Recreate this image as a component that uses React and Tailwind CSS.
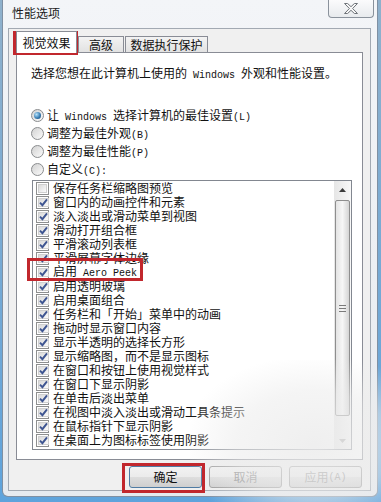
import React from "react";

const effects = [
  { label: "保存任务栏缩略图预览", checked: false },
  { label: "窗口内的动画控件和元素", checked: true },
  { label: "淡入淡出或滑动菜单到视图", checked: true },
  { label: "滑动打开组合框", checked: true },
  { label: "平滑滚动列表框", checked: true },
  { label: "平滑屏幕字体边缘", checked: true },
  { label: ["启用", " Aero Peek"], checked: true },
  { label: "启用透明玻璃", checked: true },
  { label: "启用桌面组合", checked: true },
  { label: "任务栏和「开始」菜单中的动画", checked: true },
  { label: "拖动时显示窗口内容", checked: true },
  { label: "显示半透明的选择长方形", checked: true },
  { label: "显示缩略图，而不是显示图标", checked: true },
  { label: "在窗口和按钮上使用视觉样式", checked: true },
  { label: "在窗口下显示阴影", checked: true },
  { label: "在单击后淡出菜单", checked: true },
  { label: "在视图中淡入淡出或滑动工具条提示", checked: true },
  { label: "在鼠标指针下显示阴影", checked: true },
  { label: "在桌面上为图标标签使用阴影", checked: true },
];

function Latin({ children }) {
  return <span className="font-['Liberation_Mono',monospace] text-[10px] whitespace-pre">{children}</span>;
}

function Radio({ checked }) {
  return (
    <span className="w-[13px] h-[13px] shrink-0 rounded-full border border-[#8a8c8e] bg-gradient-to-br from-[#d2d2d2] to-[#fbfbfb] flex items-center justify-center">
      {checked && (
        <span className="w-[7px] h-[7px] rounded-full bg-[radial-gradient(circle_at_35%_35%,#b7e3fb,#3a7fb5_55%,#123f68)]" />
      )}
    </span>
  );
}

function CheckBox({ checked }) {
  return (
    <span className="w-[13px] h-[13px] shrink-0 border border-[#8e8f8f] bg-white p-px flex">
      <span className="flex-1 border border-[#d0d0d0] bg-gradient-to-br from-[#dadada] to-[#fbfbfb] flex items-center justify-center">
        {checked && (
          <svg width="9" height="9" viewBox="0 0 9 9">
            <path d="M1 4.6 L3.4 7.2 L8 1.3" fill="none" stroke="#3e5591" strokeWidth="1.9" />
          </svg>
        )}
      </span>
    </span>
  );
}

function Button({ children, faded }) {
  return (
    <div
      className={`w-[73px] h-[22px] rounded-[3px] border flex items-center justify-center text-[12px] bg-[linear-gradient(#f2f2f2_0%,#ebebeb_50%,#dddddd_51%,#cfcfcf_100%)] ${
        faded ? "border-[#9a9a9a] text-[#8a8a8a]" : "border-[#4f7ba3] text-[#111]"
      }`}
    >
      {children}
    </div>
  );
}

function ScrollBar() {
  return (
    <div className="w-[17px] flex flex-col bg-gradient-to-r from-[#e6e6e6] to-[#f8f8f8]">
      <div className="h-[17px] flex items-center justify-center">
        <svg width="7" height="4" viewBox="0 0 7 4">
          <path d="M0 4 L3.5 0 L7 4 Z" fill="#3c3c3c" />
        </svg>
      </div>
      <div className="mt-[2px] h-[216px] mx-px rounded-[2px] border border-[#8e8e8e] bg-gradient-to-r from-[#e4e4e4] via-[#f6f6f6] to-[#d4d4d4] flex flex-col items-center justify-center gap-[2px]">
        <span className="w-[7px] h-px bg-[#7a7a7a]" />
        <span className="w-[7px] h-px bg-[#7a7a7a]" />
        <span className="w-[7px] h-px bg-[#7a7a7a]" />
      </div>
      <div className="flex-1" />
      <div className="h-[17px] flex items-center justify-center">
        <svg width="7" height="4" viewBox="0 0 7 4">
          <path d="M0 0 L7 0 L3.5 4 Z" fill="#9a9a9a" />
        </svg>
      </div>
    </div>
  );
}

export default function App() {
  return (
    <div className="relative w-[381px] h-[502px] overflow-hidden bg-gradient-to-b from-[#8fb1cc] to-[#5ea3dc] font-['Noto_Sans_CJK_SC',sans-serif] text-[#111]">
      {/* Window */}
      <div className="ml-[2px] w-[376px] h-[497px] flex flex-col border-x border-b border-[#7f90a3] rounded-b-[6px] bg-gradient-to-b from-[#f3f5f8] to-[#e6eaef] px-[5px] pb-[5px]">
        {/* Title bar */}
        <div className="h-[28px] flex justify-between items-start">
          <span className="mt-[5px] ml-[4px] text-[12px] leading-[16px] text-[#1a1a1a]">性能选项</span>
          <div className="w-[46px] h-[18px] mr-[-2px] rounded-b-[4px] border border-t-0 border-[#8a929c] bg-gradient-to-b from-[#fbfbfc] to-[#e8ebee] flex items-center justify-center">
            <svg width="14" height="11" viewBox="0 0 14 11">
              <path
                d="M0.5 0.5 H3.6 L7 3.7 L10.4 0.5 H13.5 L8.6 5.5 L13.5 10.5 H10.4 L7 7.3 L3.6 10.5 H0.5 L5.4 5.5 Z"
                fill="#f7f7f7"
                stroke="#6f747a"
                strokeWidth="1"
              />
            </svg>
          </div>
        </div>

        {/* Client area */}
        <div className="w-[363px] h-[463px] border border-[#a2a9b2] bg-[#f0f0f0] pt-[2px] flex flex-col">
          <div className="ml-[7px] w-[347px]">
            {/* Tabs */}
            <div className="h-[21px] flex items-end gap-px text-[12px]">
              <div className="relative z-10 w-[61px] h-[22px] -mb-px border border-b-0 border-[#898c95] bg-white flex items-center justify-center leading-[16px]">
                视觉效果
              </div>
              <div className="w-[46px] h-[16px] border border-b-0 border-[#898c95] bg-gradient-to-b from-[#f3f3f3] to-[#e2e2e2] flex items-center justify-center leading-[14px]">
                高级
              </div>
              <div className="w-[83px] h-[16px] border border-b-0 border-[#898c95] bg-gradient-to-b from-[#f3f3f3] to-[#e2e2e2] flex items-center justify-center leading-[14px]">
                数据执行保护
              </div>
            </div>

            {/* Tab page */}
            <div className="h-[408px] border border-[#898c95] bg-white pl-[14px] pt-[13px] text-[12px]">
              <div className="leading-[14px] whitespace-nowrap">
                选择您想在此计算机上使用的<Latin> Windows </Latin>外观和性能设置。
              </div>

              <div className="mt-[23px] flex flex-col">
                <label className="h-[18px] flex items-center gap-[3px] whitespace-nowrap">
                  <Radio checked />
                  <span>
                    让<Latin> Windows </Latin>选择计算机的最佳设置<Latin>(L)</Latin>
                  </span>
                </label>
                <label className="h-[18px] flex items-center gap-[3px]">
                  <Radio />
                  <span>
                    调整为最佳外观<Latin>(B)</Latin>
                  </span>
                </label>
                <label className="h-[18px] flex items-center gap-[3px]">
                  <Radio />
                  <span>
                    调整为最佳性能<Latin>(P)</Latin>
                  </span>
                </label>
                <label className="h-[18px] flex items-center gap-[3px]">
                  <Radio />
                  <span>
                    自定义<Latin>(C):</Latin>
                  </span>
                </label>
              </div>

              {/* Effects list */}
              <div className="mt-[2px] ml-px w-[320px] h-[270px] border border-[#828790] bg-white flex">
                <div className="flex-1 pl-[3px] flex flex-col">
                  {effects.map((item, index) => (
                    <div key={index} className="h-[14px] shrink-0 flex items-center gap-[4px] leading-[14px] whitespace-nowrap">
                      <CheckBox checked={item.checked} />
                      {Array.isArray(item.label) ? (
                        <span>
                          {item.label[0]}
                          <Latin>{item.label[1]}</Latin>
                        </span>
                      ) : (
                        <span>{item.label}</span>
                      )}
                    </div>
                  ))}
                </div>
                <ScrollBar />
              </div>
            </div>
          </div>

          {/* Buttons */}
          <div className="mt-[6px] pr-[8px] flex justify-end gap-[7px]">
            <Button>确定</Button>
            <Button faded>取消</Button>
            <Button faded>
              应用<Latin>(A)</Latin>
            </Button>
          </div>
        </div>
      </div>

      {/* Watermark haze */}
      <div className="pointer-events-none absolute left-[190px] top-[360px] w-[191px] h-[142px] bg-[radial-gradient(ellipse_at_65%_60%,rgba(236,236,236,0.85)_0%,rgba(236,236,236,0.55)_45%,rgba(236,236,236,0)_75%)]" />

      {/* Red highlight annotations */}
      <div className="pointer-events-none absolute left-[13px] top-[31px] w-[65px] h-[24px] border-[3px] border-[#c1272d]" />
      <div className="pointer-events-none absolute left-[27px] top-[258px] w-[116px] h-[23px] border-[3px] border-[#c1272d]" />
      <div className="pointer-events-none absolute left-[122px] top-[463px] w-[83px] h-[30px] border-[3px] border-[#c1272d]" />
    </div>
  );
}
